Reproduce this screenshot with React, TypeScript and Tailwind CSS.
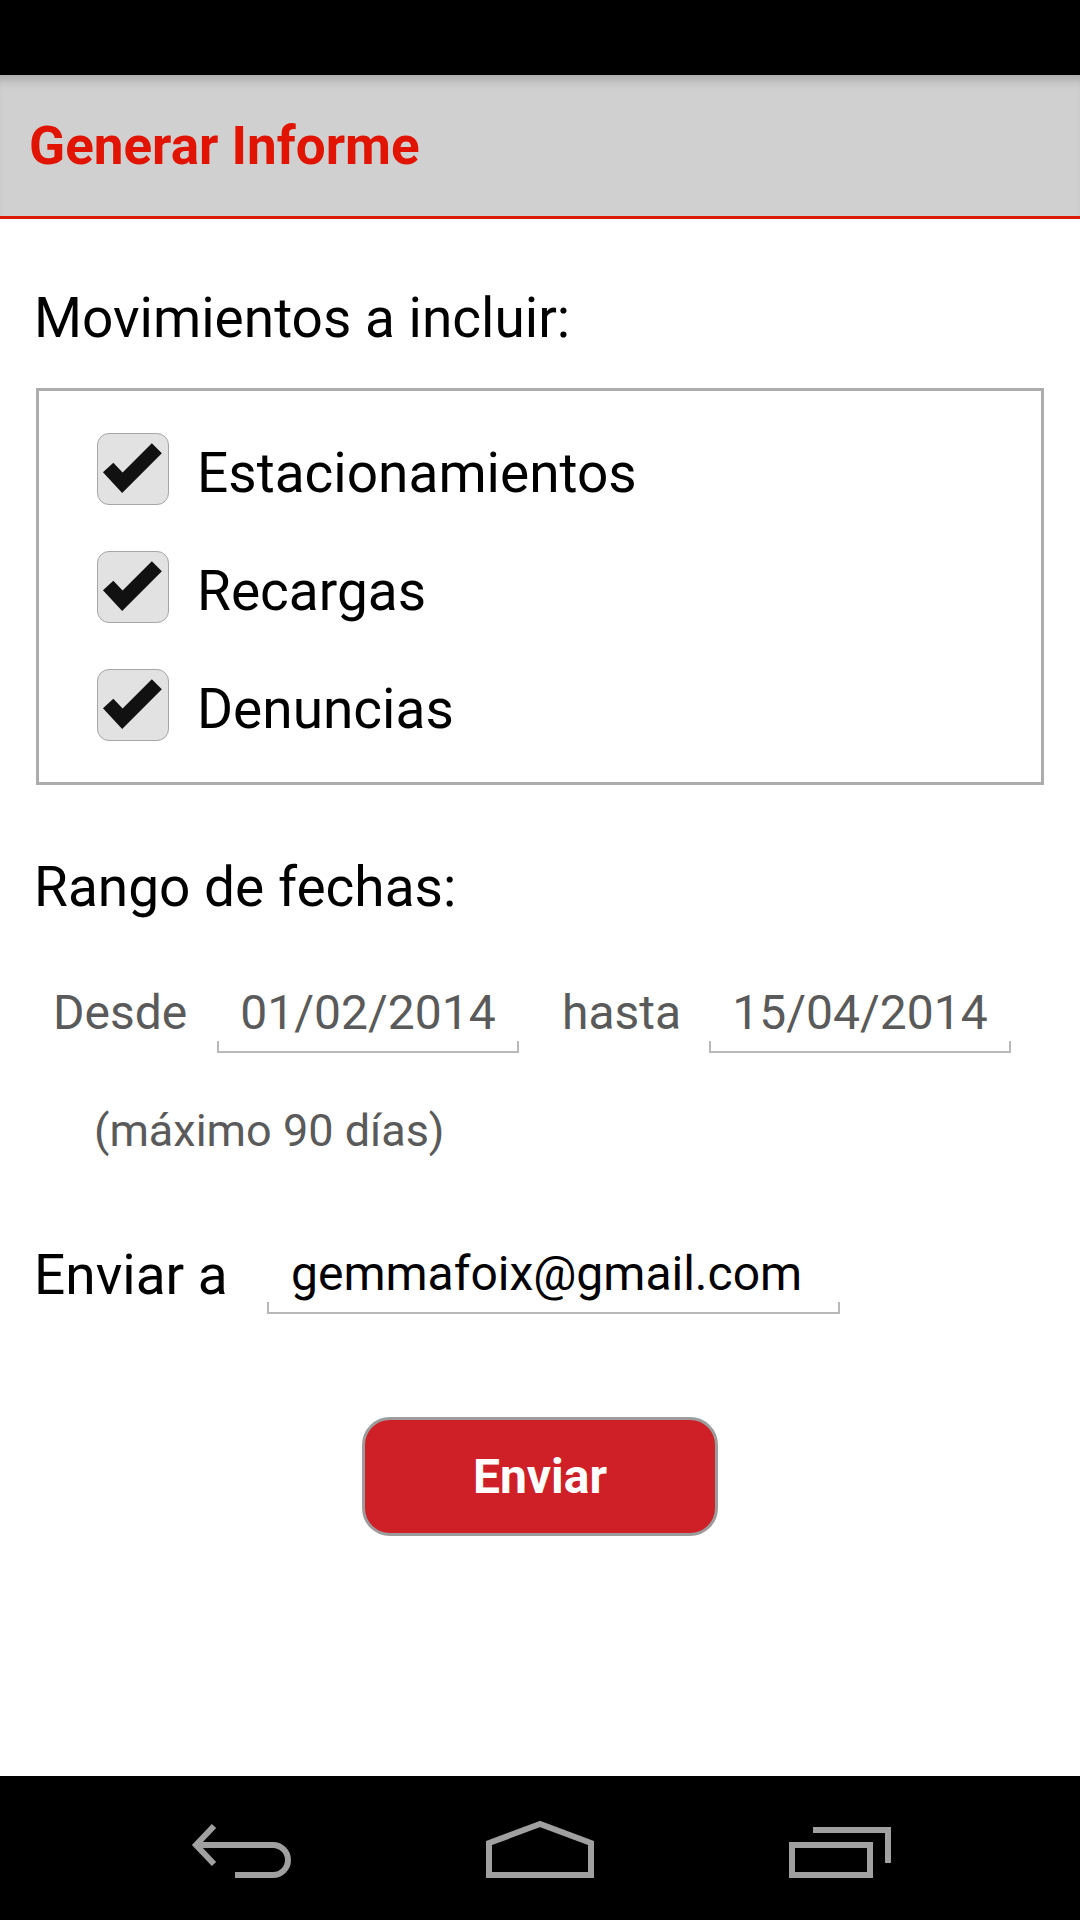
import React from "react";

const movimientos = ["Estacionamientos", "Recargas", "Denuncias"];

function CheckBox() {
  return (
    <div className="w-[72px] h-[72px] shrink-0 rounded-[12px] border-[1.5px] border-[#a6a6a6] bg-[#e1e2e1]">
      <svg viewBox="0 0 69 69" className="w-full h-full">
        <polyline
          points="10,33 24,48 58,14"
          fill="none"
          stroke="#111111"
          strokeWidth="14"
          strokeLinejoin="miter"
          strokeLinecap="butt"
        />
      </svg>
    </div>
  );
}

function DateField({ value }: { value: string }) {
  return (
    <div className="w-[302px] flex flex-col">
      <span className="text-[48px] leading-[56px] text-center text-[#5a5a5a]">{value}</span>
      <div className="h-[12px] border-x-2 border-b-2 border-[#b8b8b8]" />
    </div>
  );
}

function NavBar() {
  return (
    <div className="h-[144px] bg-black flex justify-center items-start gap-[180px] pt-[34px]">
      {/* back */}
      <svg width="120" height="80" viewBox="0 0 120 80">
        <g fill="none" stroke="#a0a0a0" strokeWidth="6">
          <polyline points="34,16 16,35 34,54" strokeLinejoin="miter" />
          <path d="M16 35 H93 A15 15 0 0 1 93 65 H55" />
        </g>
      </svg>
      {/* home */}
      <svg width="120" height="80" viewBox="0 0 120 80">
        <polygon
          points="60,14 9,33 9,65 111,65 111,33"
          fill="none"
          stroke="#a0a0a0"
          strokeWidth="6"
          strokeLinejoin="miter"
        />
      </svg>
      {/* recents */}
      <svg width="120" height="80" viewBox="0 0 120 80">
        <g fill="none" stroke="#a0a0a0" strokeWidth="6">
          <rect x="12" y="35" width="78" height="30" />
          <path d="M33 20 H108 V53" strokeLinejoin="miter" />
        </g>
      </svg>
    </div>
  );
}

export default function App() {
  return (
    <div className="w-[1080px] h-[1920px] flex flex-col bg-white font-['Roboto',sans-serif]">
      {/* status bar */}
      <div className="h-[75px] bg-black" />

      {/* action bar */}
      <div className="h-[144px] bg-[#d0d0d0] border-b-[3px] border-[#dc1a06] shadow-[inset_0_12px_12px_-8px_rgba(0,0,0,0.22)] flex items-center px-[29px]">
        <h1 className="text-[53px] font-bold text-[#e01400] leading-[64px]">Generar Informe</h1>
      </div>

      <main className="flex-1 flex flex-col px-[34px]">
        <h2 className="mt-[67px] text-[55px] leading-[64px] text-black">Movimientos a incluir:</h2>

        <div className="mt-[38px] mx-[2px] border-[3px] border-[#acacac] pt-[42px] pb-[41px] pl-[58px] flex flex-col gap-[46px]">
          {movimientos.map((m) => (
            <div key={m} className="flex items-start">
              <CheckBox />
              <span className="ml-[28px] pt-[9px] text-[55px] leading-[63px] text-black">{m}</span>
            </div>
          ))}
        </div>

        <h2 className="mt-[70px] text-[55px] leading-[64px] text-black">Rango de fechas:</h2>

        <div className="mt-[66px] flex items-start">
          <span className="w-[183px] pl-[19px] text-[48px] leading-[56px] text-[#5a5a5a]">Desde</span>
          <DateField value="01/02/2014" />
          <span className="w-[190px] pl-[43px] text-[48px] leading-[56px] text-[#5a5a5a]">hasta</span>
          <DateField value="15/04/2014" />
        </div>

        <p className="mt-[52px] pl-[60px] text-[45px] leading-[52px] text-[#5a5a5a]">(máximo 90 días)</p>

        <div className="mt-[86px] flex items-start">
          <span className="w-[233px] text-[55px] leading-[64px] text-black">Enviar a</span>
          <div className="mt-[3px] w-[573px] flex flex-col">
            <span className="pl-[24px] text-[48px] leading-[56px] text-black">gemmafoix@gmail.com</span>
            <div className="h-[12px] border-x-2 border-b-2 border-[#b8b8b8]" />
          </div>
        </div>

        <button className="mt-[103px] mx-auto w-[356px] h-[119px] rounded-[28px] border-[3px] border-[#9c9c9c] bg-[#cf2027] text-white text-[48px] font-bold flex items-center justify-center">
          Enviar
        </button>
      </main>

      <NavBar />
    </div>
  );
}
